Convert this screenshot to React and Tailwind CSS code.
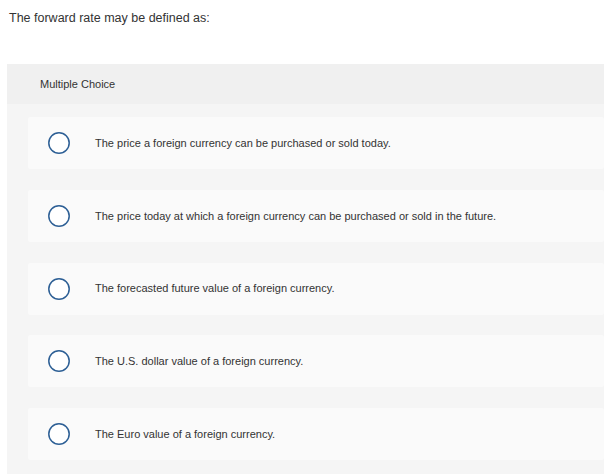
import React from 'react';

const options = [
  'The price a foreign currency can be purchased or sold today.',
  'The price today at which a foreign currency can be purchased or sold in the future.',
  'The forecasted future value of a foreign currency.',
  'The U.S. dollar value of a foreign currency.',
  'The Euro value of a foreign currency.',
];

const Radio = () => (
  <svg width="22" height="22" viewBox="0 0 22 22" className="shrink-0">
    <circle cx="11" cy="11" r="10.2" fill="white" stroke="#2d5f95" strokeWidth="1.5" />
  </svg>
);

export default function App() {
  return (
    <div className="min-h-[474px] bg-white" style={{ fontFamily: '"Liberation Sans", Arial, sans-serif' }}>
      <p className="pl-[9px] pt-[9px] h-[64px] text-[12.5px] text-[#333]">The forward rate may be defined as:</p>
      <div className="ml-[7px]">
        <div className="h-[40px] bg-[#f0f0f0] flex items-center pl-[33px] text-[11px] text-[#333]">Multiple Choice</div>
        <div className="bg-[#f5f5f5] pl-[21px] pt-[13px] pb-[14px] flex flex-col gap-[20.75px]">
          {options.map((o) => (
            <div key={o} className="h-[52px] bg-[#fafafa] rounded-[2px] flex items-center pl-[20px] gap-[25px]">
              <Radio />
              <span className="text-[11px] text-[#333]">{o}</span>
            </div>
          ))}
        </div>
      </div>
    </div>
  );
}
